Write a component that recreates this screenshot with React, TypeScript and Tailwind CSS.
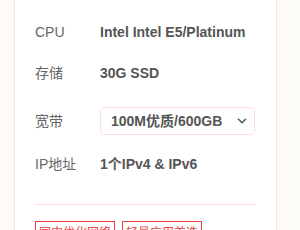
import { ChevronDown } from "lucide-react";

const font = { fontFamily: '"Liberation Sans", "Noto Sans CJK SC", sans-serif' };

function Row({ label, children, className = "" }: { label: string; children: React.ReactNode; className?: string }) {
  return (
    <div className={`flex items-center ${className}`}>
      <span className="w-[65px] shrink-0 text-[14px] leading-5 text-[#666]">{label}</span>
      {children}
    </div>
  );
}

export default function App() {
  return (
    <div className="h-[230px] w-[300px] overflow-hidden bg-[#fdfbf8] pl-[14px]" style={font}>
      <div className="h-[260px] w-[263px] border border-t-0 border-[#fde0de] bg-white pl-5 pr-[20px] pt-[22px]">
        <Row label="CPU">
          <span className="text-[14px] font-bold leading-5 text-[#555]">Intel Intel E5/Platinum</span>
        </Row>
        <Row label="存储" className="mt-[21px]">
          <span className="text-[14px] font-bold leading-5 text-[#555]">30G SSD</span>
        </Row>
        <Row label="宽带" className="mt-[24px]">
          <div className="flex h-[28px] w-[155px] items-center justify-between rounded-[5px] border border-[#fde0de] pl-[10px] pr-[5px]">
            <span className="text-[14px] font-bold text-[#555]">100M优质/600GB</span>
            <ChevronDown size={14} strokeWidth={2.6} className="text-[#555]" />
          </div>
        </Row>
        <Row label="IP地址" className="mt-[19px]">
          <span className="text-[14px] font-bold leading-5 text-[#555]">1个IPv4 &amp; IPv6</span>
        </Row>
        <div className="mt-[30px] h-px bg-[#fde0de]" />
        <div className="mt-4 flex gap-[7px]">
          <span className="border border-[#e8413f] px-[3px] py-[3px] text-[12px] leading-4 text-[#e8413f]">国内优化网络</span>
          <span className="border border-[#e8413f] px-[3px] py-[3px] text-[12px] leading-4 text-[#e8413f]">轻量应用首选</span>
        </div>
      </div>
    </div>
  );
}
